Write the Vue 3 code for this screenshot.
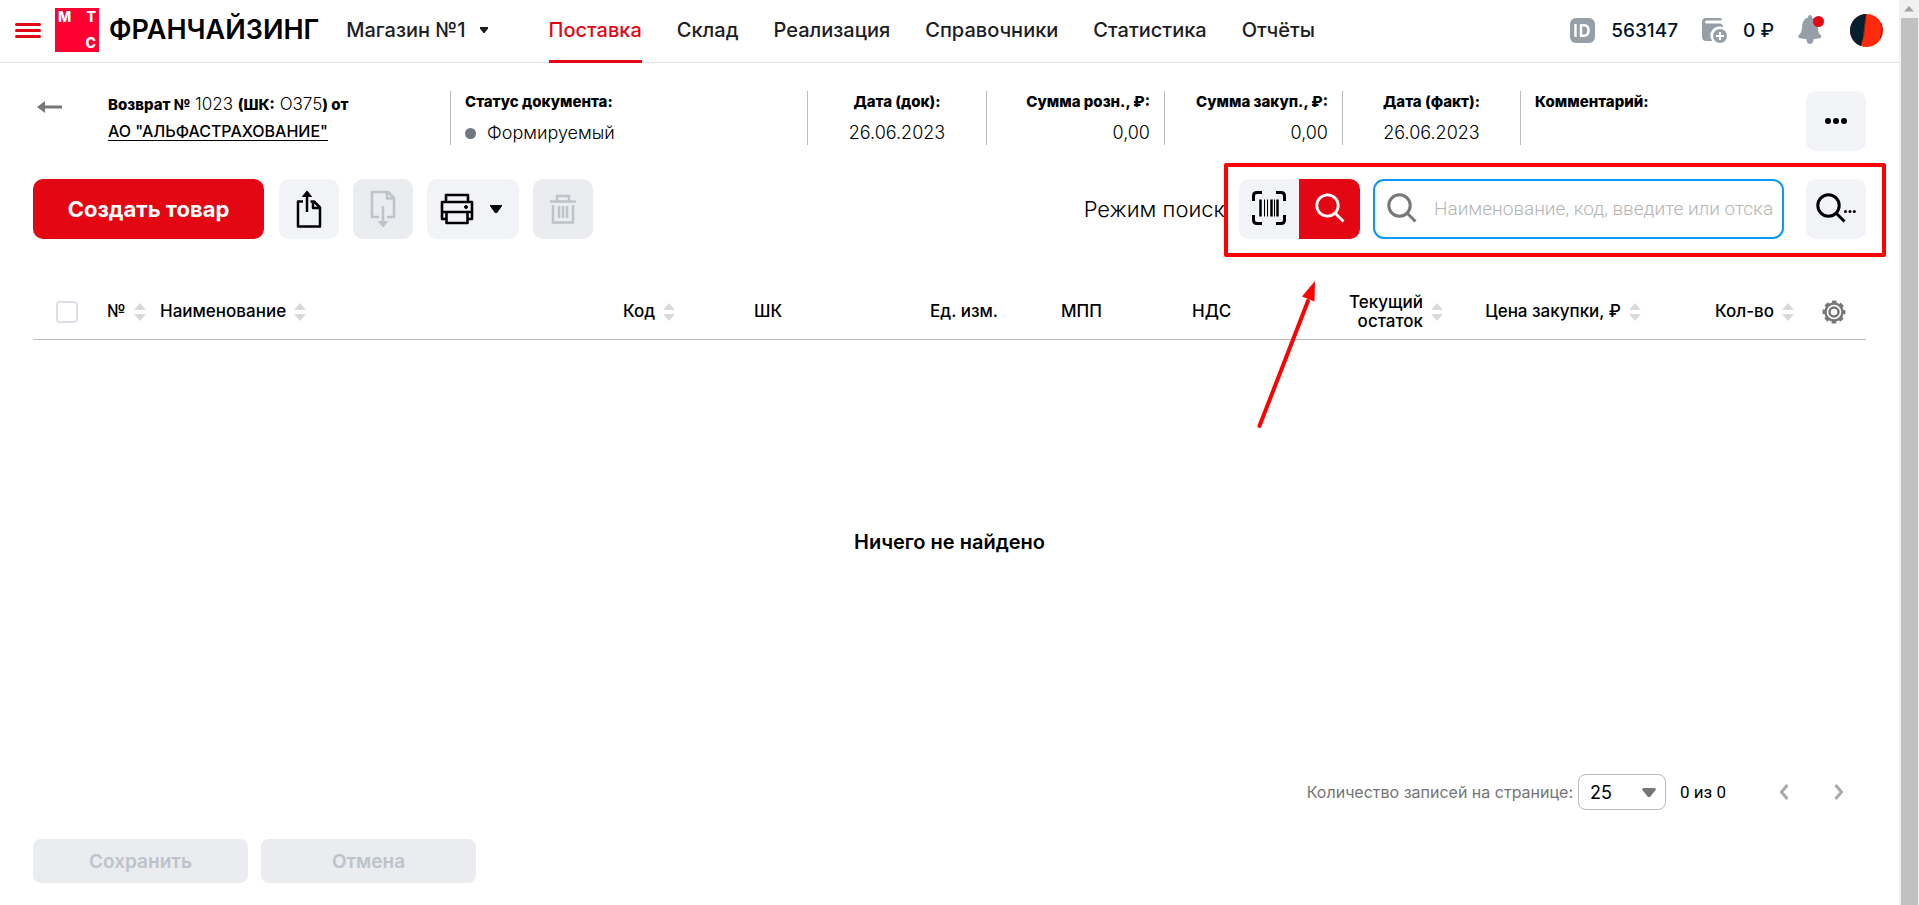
<script setup>
import { ref } from 'vue'

const nav = ['Поставка', 'Склад', 'Реализация', 'Справочники', 'Статистика', 'Отчёты']
const columns = [
  { title: '№', sort: true },
  { title: 'Наименование', sort: true },
  { title: 'Код', sort: true },
  { title: 'ШК' },
  { title: 'Ед. изм.' },
  { title: 'МПП' },
  { title: 'НДС' },
  { title: 'Текущий остаток', sort: true, end: true },
  { title: 'Цена закупки, ₽', sort: true, end: true },
  { title: 'Кол-во', sort: true, end: true },
]
const query = ref('')
const pageSize = ref('25')
const allSelected = ref(false)
</script>

<template>
  <div class="window">
    <div class="page">
      <header class="header">
        <button class="burger" aria-label="Меню"><i></i><i></i><i></i></button>
        <a class="logo" href="#" aria-label="МТС">
          <span>М</span><span>Т</span><span></span><span>С</span>
        </a>
        <a class="brand" href="#">ФРАНЧАЙЗИНГ</a>
        <button class="shop">
          Магазин №1
          <svg width="10" height="8" viewBox="0 0 10 8"><path d="M1 1h8v1.500L5.600 7H4.400L1 2.500z" fill="#1d2023" /></svg>
        </button>
        <nav class="nav">
          <a v-for="(item, i) in nav" :key="item" href="#" :class="{ active: i === 0 }">{{ item }}</a>
        </nav>
        <div class="account">
          <svg width="25" height="25" viewBox="0 0 25 25">
            <rect width="25" height="25" rx="6" fill="#969fa8" />
            <path d="M5.500 6v13M11 7.200h3.200c2.900 0 4.300 2 4.300 5.300s-1.400 5.300-4.300 5.300H11z" fill="none" stroke="#fff" stroke-width="2.400" />
          </svg>
          <span class="amount">563147</span>
          <svg width="25" height="25" viewBox="0 0 25 25">
            <path d="M19.500 0H4C1.500 0 0 1.500 0 4v14.500C0 21.500 1.500 23 4.500 23h5.700A9 9 0 0 1 21 9.300C20.900 6.900 20 5.500 17.500 5.500H4.500a1.500 1.500 0 0 1 0-3h15z" fill="#969fa8" />
            <circle cx="18" cy="18" r="7" fill="#969fa8" />
            <path d="M18 14v8M14 18h8" stroke="#fff" stroke-width="2.200" />
          </svg>
          <span class="amount">0 ₽</span>
          <button aria-label="Уведомления">
            <svg width="26" height="30" viewBox="0 0 26 30">
              <path d="M12 0c1.500 0 2 1 2 2.500 3.500 1 5.500 4 5.700 8 .2 5 .8 7.500 3 9.500 1.200 1.200.6 2.800-1 3.200-2 .5-4 .8-6.200 1 0 3-1.500 4.800-3.500 4.800s-3.500-1.800-3.500-4.800c-2.300-.2-4.500-.5-6.600-1-1.600-.4-2.200-2-1-3.200 2.300-2 3-4.500 3.300-9.500.2-4 2.300-7 5.800-8C10 1 10.500 0 12 0z" fill="#969fa8" />
              <circle cx="20.500" cy="6.500" r="5.500" fill="#e30613" />
            </svg>
          </button>
          <button class="avatar" aria-label="Профиль">
            <svg width="33" height="33" viewBox="0 0 33 33">
              <circle cx="16.500" cy="16.500" r="16.500" fill="#ff2a0c" />
              <path d="M16.300 0a16.500 16.500 0 0 0-5.500 32L13 25l1.500-12z" fill="#05202f" />
              <path d="M15.500 5l-2 18M31 9c1.500 5 1.300 10-1 16" fill="none" stroke="#7c261f" stroke-width="1" />
            </svg>
          </button>
        </div>
      </header>

      <main class="content">
        <section class="doc">
          <button class="back" aria-label="Назад">
            <svg width="26" height="12" viewBox="0 0 26 12"><path d="M0 6l8-6v12zM7 4.500h18v3H7z" fill="#777" /></svg>
          </button>
          <div class="doc-title">
            <div><b>Возврат №</b> 1023 <b>(ШК:</b> О375<b>) от</b></div>
            <a href="#">АО "АЛЬФАСТРАХОВАНИЕ"</a>
          </div>
          <div class="field">
            <b>Статус документа:</b>
            <span class="status">Формируемый</span>
          </div>
          <div class="field center"><b>Дата (док):</b><span>26.06.2023</span></div>
          <div class="field end"><b>Сумма розн., ₽:</b><span>0,00</span></div>
          <div class="field end"><b>Сумма закуп., ₽:</b><span>0,00</span></div>
          <div class="field center"><b>Дата (факт):</b><span>26.06.2023</span></div>
          <div class="field"><b>Комментарий:</b></div>
          <button class="tool" aria-label="Ещё">
            <svg width="24" height="8" viewBox="0 0 24 8"><circle cx="4" cy="4" r="3" /><circle cx="12" cy="4" r="3" /><circle cx="20" cy="4" r="3" /></svg>
          </button>
        </section>

        <section class="toolbar">
          <button class="primary">Создать товар</button>
          <button class="tool" aria-label="Выгрузить">
            <svg width="26" height="38" viewBox="0 0 26 38" fill="none" stroke="#000" stroke-width="2.500" stroke-linejoin="round">
              <path d="M7 11.500H2V36.500h22V17.500l-6-6H14.500" /><path d="M17 11.500v6.500H24" />
              <path d="M11 22V5" /><path d="M11 1l4.500 5.500h-9z" fill="#000" stroke-width="1" />
            </svg>
          </button>
          <button class="tool" disabled aria-label="Загрузить">
            <svg width="26" height="38" viewBox="0 0 26 38" fill="none" stroke="#bcc3cb" stroke-width="2.500" stroke-linejoin="round">
              <path d="M9 27H2V2h16l6 6v19h-7" /><path d="M17 2v6.500H24" />
              <path d="M13 16v17" /><path d="M13 37l-4.500-5.500h9z" fill="#bcc3cb" stroke-width="1" />
            </svg>
          </button>
          <button class="tool print" aria-label="Печать">
            <svg width="34" height="32" viewBox="0 0 34 32" fill="none" stroke="#000" stroke-width="2.600" stroke-linejoin="round">
              <path d="M6 8V2h22v6M6 26H2V9h30v17h-4M2 19h30M6.500 19v11h21V19" /><circle cx="26" cy="14" r="1.500" fill="#000" stroke-width="1" />
            </svg>
            <svg width="14" height="8" viewBox="0 0 14 8"><path d="M1 0h12v1L8 8H6L1 1z" /></svg>
          </button>
          <button class="tool" disabled aria-label="Удалить">
            <svg width="28" height="30" viewBox="0 0 28 30" fill="none" stroke="#bcc3cb" stroke-width="2.500">
              <path d="M1 7.500h26M8 7V2h12v5M4 11v17.500h20V11M10 12v12M14 12v12M18 12v12" />
            </svg>
          </button>

          <span class="mode">Режим поиск</span>
          <div class="search">
            <div class="switch">
              <button aria-label="Сканер">
                <svg width="34" height="34" viewBox="0 0 34 34" fill="none" stroke="#000" stroke-width="3">
                  <path d="M1.500 10V5q0-3.500 3.500-3.500h5M24 1.500h5q3.500 0 3.500 3.500v5M32.500 24v5q0 3.500-3.500 3.500h-5M10 32.500H5q-3.500 0-3.500-3.500v-5" />
                  <path d="M8.500 8.500v17M19.500 8.500v17M25.500 8.500v17" stroke-width="2.500" />
                  <path d="M12.500 8.500v17M15.500 8.500v17M22.500 8.500v17" stroke-width="1" />
                </svg>
              </button>
              <button class="on" aria-label="Поиск">
                <svg width="30" height="30" viewBox="0 0 30 30" fill="none" stroke="#fff" stroke-width="2.800"><circle cx="12.500" cy="12.500" r="10.700" /><path d="M20 20l8.500 8.500" /></svg>
              </button>
            </div>
            <label class="search-box">
              <svg width="30" height="30" viewBox="0 0 30 30" fill="none" stroke="#777" stroke-width="3"><circle cx="12.500" cy="12.500" r="10.700" /><path d="M20 20l8.500 8.500" /></svg>
              <input v-model="query" type="text" aria-label="Поиск товара" placeholder="Наименование, код, введите или отсканируйте" />
            </label>
            <button class="tool" aria-label="Расширенный поиск">
              <svg width="40" height="30" viewBox="0 0 40 30" fill="none" stroke="#000" stroke-width="3">
                <circle cx="12.500" cy="12.500" r="10.700" /><path d="M20 20l8.500 8.500" />
                <g fill="#000" stroke="none"><circle cx="29.500" cy="18.500" r="1.500" /><circle cx="34" cy="18.500" r="1.500" /><circle cx="38.300" cy="18.500" r="1.500" /></g>
              </svg>
            </button>
            <div class="frame"></div>
            <svg class="pointer" width="60" height="150" viewBox="0 0 60 150">
              <path d="M2.500 146L51 21" stroke="#f00" stroke-width="4" stroke-linecap="round" /><path d="M58 1L45 16.500l12.500 5z" fill="#f00" />
            </svg>
          </div>
        </section>

        <table class="grid">
          <colgroup>
            <col class="c-check" /><col class="c-num" /><col /><col class="c-code" /><col class="c-bar" />
            <col class="c-code" /><col class="c-code" /><col class="c-code" /><col class="c-stock" />
            <col class="c-price" /><col class="c-qty" /><col class="c-gear" />
          </colgroup>
          <thead>
            <tr>
              <th class="check"><input v-model="allSelected" type="checkbox" aria-label="Выбрать все" /></th>
              <th v-for="c in columns" :key="c.title">
                <div class="head" :class="{ end: c.end }">
                  <span>{{ c.title }}</span>
                  <button v-if="c.sort" :aria-label="'Сортировать: ' + c.title">
                    <svg width="12" height="18" viewBox="0 0 12 18" fill="#d9d9d9"><path d="M6 0l6 7H0zM6 18l6-7H0z" /></svg>
                  </button>
                </div>
              </th>
              <th class="settings">
                <button aria-label="Настройки">
                  <svg width="24" height="24" viewBox="0 0 24 24" fill="none" stroke="#777">
                    <circle cx="12" cy="12" r="10" stroke-width="3" stroke-dasharray="4.400 3.450" stroke-dashoffset="2.200" />
                    <circle cx="12" cy="12" r="8.500" stroke-width="2.500" /><circle cx="12" cy="12" r="4.500" stroke-width="2.500" />
                  </svg>
                </button>
              </th>
            </tr>
          </thead>
        </table>

        <div class="empty">Ничего не найдено</div>

        <div class="pager">
          <label for="size">Количество записей на странице:</label>
          <div class="select">
            <select id="size" v-model="pageSize"><option>25</option><option>50</option><option>100</option></select>
            <svg width="14" height="9" viewBox="0 0 14 9"><path d="M1 0h12l1 1.500L8 9H6L0 1.500z" fill="#777" /></svg>
          </div>
          <span class="range">0 из 0</span>
          <button aria-label="Предыдущая страница"><svg width="10" height="18" viewBox="0 0 10 18"><path d="M8.500 2L2.500 9l6 7" /></svg></button>
          <button aria-label="Следующая страница"><svg width="10" height="18" viewBox="0 0 10 18"><path d="M1.500 2l6 7-6 7" /></svg></button>
        </div>

        <div class="actions">
          <button disabled>Сохранить</button>
          <button disabled>Отмена</button>
        </div>
      </main>
    </div>
    <div class="scrollbar">
      <svg width="10" height="6" viewBox="0 0 10 6"><path d="M5 0l5 5.500H0z" fill="#a3a3a3" /></svg>
      <div class="thumb"></div>
    </div>
  </div>
</template>

<style>
body {
  margin: 0;
  overflow: hidden;
}
</style>

<style scoped>
.window {
  display: flex;
  height: 100vh;
  background: #fff;
  color: #000;
  font-family: Inter, Roboto, sans-serif;
  font-size: 16px;
}
.window *,
.window {
  box-sizing: border-box;
}
button {
  padding: 0;
  border: 0;
  background: none;
  font: inherit;
  color: inherit;
}
a {
  color: inherit;
  text-decoration: none;
}
svg {
  display: block;
  flex: none;
}
.page {
  flex: 1;
  min-width: 0;
  display: flex;
  flex-direction: column;
}
.header {
  display: flex;
  align-items: center;
  height: 63px;
  padding: 0 16px 2px 15px;
  border-bottom: 1px solid #e2e3eb;
  font-size: 20px;
  font-weight: 500;
  color: #1d2023;
}
.burger {
  display: grid;
  gap: 3px;
  width: 26px;
}
.burger i {
  height: 3px;
  border-radius: 2px;
  background: #e30613;
}
.logo {
  display: grid;
  grid-template-columns: 1fr 1fr;
  align-content: space-between;
  width: 44px;
  height: 44px;
  margin-left: 14px;
  padding: 2px 3px;
  background: #ff0032;
  color: #fff;
  font-size: 14px;
  font-weight: 800;
  line-height: 14px;
}
.logo span:nth-child(even) {
  text-align: right;
}
.brand {
  margin-left: 10px;
  font-size: 27px;
  line-height: 28px;
  font-weight: 600;
  color: #000;
}
.shop {
  display: flex;
  align-items: center;
  gap: 13px;
  margin-left: 27px;
}
.nav {
  display: flex;
  align-self: stretch;
  gap: 35px;
  margin: 0 0 -3px 60px;
}
.nav a {
  display: flex;
  align-items: center;
  border-bottom: 3px solid transparent;
}
.nav .active {
  color: #e30613;
  border-bottom-color: #e30613;
}
.account {
  display: flex;
  align-items: center;
  margin-left: auto;
  font-size: 19px;
  color: #001424;
}
.amount {
  margin: 0 24px 0 16px;
}
.avatar {
  margin-left: 26px;
}
.content {
  flex: 1;
  display: flex;
  flex-direction: column;
  padding: 28px 33px 22px;
}
.doc {
  display: grid;
  grid-template-columns: 75px 342fr 357fr 179fr 178fr 178fr 178fr 286fr 60px;
  height: 60px;
}
.back {
  justify-self: start;
  align-self: start;
  margin: 10px 0 0 4px;
}
.doc-title {
  font-size: 17px;
  line-height: 27px;
  font-weight: 300;
}
.doc-title b {
  font-size: 15px;
  font-weight: 800;
}
.doc-title a {
  font-size: 16px;
  font-weight: 500;
  text-decoration: underline;
  text-underline-offset: 3px;
}
.field {
  display: flex;
  flex-direction: column;
  height: 54px;
  padding: 0 14px;
  border-left: 1px solid #bbb;
  font-size: 18px;
  line-height: 24px;
  font-weight: 300;
  white-space: nowrap;
}
.field b {
  margin-bottom: 8px;
  font-size: 15px;
  line-height: 22px;
  font-weight: 800;
}
.field.center {
  align-items: center;
}
.field.end {
  align-items: flex-end;
}
.status {
  display: flex;
  align-items: center;
  gap: 11px;
}
.status::before {
  content: '';
  width: 11px;
  height: 11px;
  border-radius: 50%;
  background: #6e7782;
}
.tool {
  display: flex;
  align-items: center;
  justify-content: center;
  width: 60px;
  height: 60px;
  border-radius: 10px;
  background: #f2f3f7;
}
.tool:disabled {
  background: #ebecf0;
}
.toolbar {
  display: flex;
  align-items: center;
  gap: 14px;
  margin-top: 28px;
}
.primary {
  width: 231px;
  height: 60px;
  margin-right: 1px;
  border-radius: 10px;
  background: #e30613;
  color: #fff;
  font-size: 22px;
  font-weight: 700;
}
.print {
  justify-content: flex-start;
  width: 92px;
  padding-left: 13px;
  gap: 15px;
}
.mode {
  margin-left: auto;
  font-size: 22px;
  font-weight: 300;
}
.search {
  position: relative;
  display: flex;
}
.search svg {
  margin-bottom: 3px;
}
.switch {
  display: flex;
  border-radius: 10px;
  overflow: hidden;
}
.switch button {
  display: flex;
  align-items: center;
  justify-content: center;
  width: 60px;
  height: 60px;
  background: #f2f3f7;
}
.switch .on {
  width: 61px;
  background: #e30613;
}
.search-box {
  display: flex;
  align-items: center;
  gap: 17px;
  width: 411px;
  margin: 0 22px 0 13px;
  padding: 0 9px 0 12px;
  border: 2px solid #0a97fa;
  border-radius: 11px;
}
.search-box input {
  flex: 1;
  min-width: 0;
  padding: 0 0 2px;
  border: 0;
  outline: 0;
  background: none;
  font: 300 19px Roboto, sans-serif;
}
.search-box input::placeholder {
  color: #b4b4b4;
}
.frame {
  position: absolute;
  inset: -16px -20px -18px -15px;
  border: 4px solid #f00;
  border-radius: 2px;
  pointer-events: none;
}
.pointer {
  position: absolute;
  top: 101px;
  left: 18px;
  pointer-events: none;
}
.grid {
  width: 100%;
  margin-top: 46px;
  border-collapse: collapse;
  table-layout: fixed;
  border-bottom: 1px solid #bbb;
}
.c-check { width: 74px; }
.c-num { width: 53px; }
.c-code { width: 131px; }
.c-bar { width: 176px; }
.c-stock { width: 120px; }
.c-price { width: 198px; }
.c-qty { width: 153px; }
.c-gear { width: 72px; }
.grid th {
  height: 54px;
  padding: 0;
  font-size: 17px;
  line-height: 19px;
  font-weight: 500;
  text-align: left;
}
.check input {
  appearance: none;
  display: block;
  width: 22px;
  height: 22px;
  margin: 0 0 0 23px;
  border: 2px solid #dce0e6;
  border-radius: 4px;
}
.head {
  display: flex;
  align-items: center;
  gap: 8px;
}
.head.end {
  justify-content: flex-end;
  text-align: right;
}
.settings button {
  display: block;
  margin-left: 28px;
}
.empty {
  flex: 1;
  padding-top: 190px;
  font-size: 20px;
  line-height: 24px;
  font-weight: 600;
  text-align: center;
}
.pager {
  display: flex;
  align-items: center;
  justify-content: flex-end;
  margin-bottom: 29px;
  padding-right: 22px;
  font-family: Roboto, sans-serif;
}
.pager label {
  color: #757575;
  font-family: Inter, Roboto, sans-serif;
}
.select {
  position: relative;
  margin-left: 5px;
}
.select select {
  appearance: none;
  display: block;
  width: 88px;
  height: 36px;
  padding: 0 11px;
  border: 1px solid #bbb;
  border-radius: 8px;
  background: #fff;
  color: #000;
  font: 18px Inter, Roboto, sans-serif;
}
.select svg {
  position: absolute;
  top: 14px;
  right: 10px;
  pointer-events: none;
}
.range {
  margin: 0 8px 0 14px;
  font-size: 17px;
}
.pager button {
  margin-left: 45px;
}
.pager path {
  fill: none;
  stroke: #aaa;
  stroke-width: 3;
}
.pager .select path {
  fill: #777;
  stroke: none;
}
.actions {
  display: flex;
  gap: 13px;
}
.actions button {
  width: 215px;
  height: 44px;
  border-radius: 8px;
  background: #ebecf0;
  color: #bcc3cb;
  font-size: 19px;
  font-weight: 600;
}
.scrollbar {
  display: flex;
  flex-direction: column;
  align-items: center;
  width: 20px;
  padding-top: 6px;
  background: #f1f1f1;
}
.thumb {
  flex: 1;
  width: 17px;
  margin-top: 6px;
  background: #c1c1c1;
}
</style>
